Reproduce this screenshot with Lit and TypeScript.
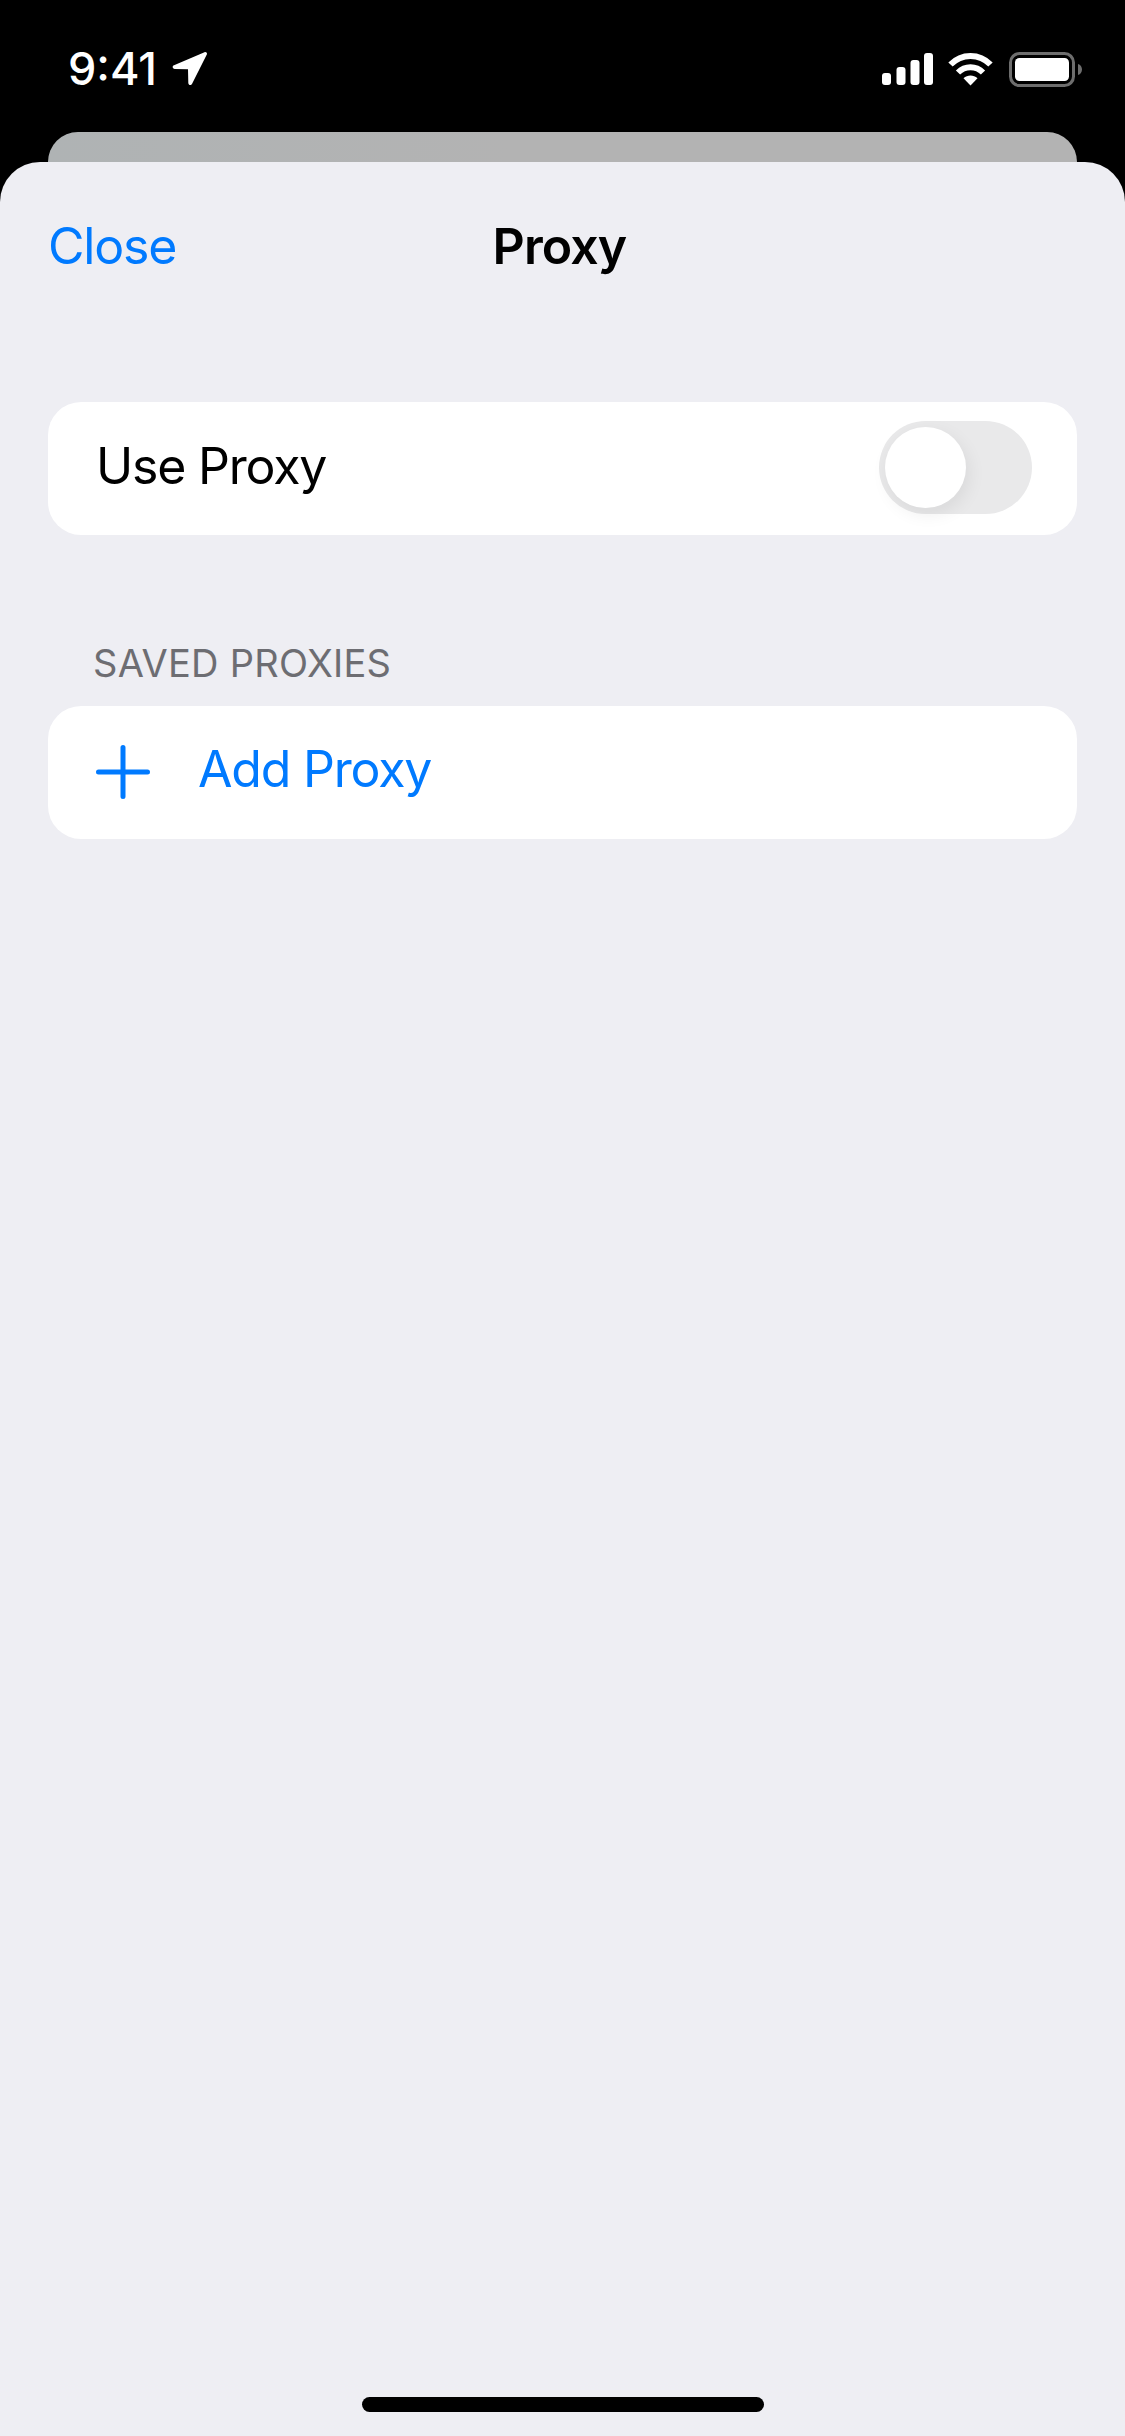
import { LitElement, html, css } from 'lit';
import { customElement } from 'lit/decorators.js';

@customElement('app-root')
export class AppRoot extends LitElement {
  static styles = css`
    :host {
      display: block;
      width: 1125px;
      height: 2436px;
      background: #000;
      font-family: Inter, "Liberation Sans", sans-serif;
      overflow: hidden;
    }
    .status {
      height: 132px;
      box-sizing: border-box;
      padding: 46px 43px 0 68px;
      display: flex;
      align-items: flex-start;
      color: #fff;
    }
    .time {
      display: flex;
      align-items: center;
      height: 46px;
      font-size: 45px;
      font-weight: 500;
      line-height: 46px;
      letter-spacing: 0;
    }
    .arrow {
      width: 36px;
      height: 36px;
      margin-left: 14px;
    }
    .indicators {
      margin-left: auto;
      display: flex;
      align-items: center;
      height: 46px;
    }
    .signal { width: 51px; height: 33px; }
    .wifi { width: 45px; height: 34px; margin-left: 15px; }
    .battery { width: 73px; height: 35px; margin-left: 16px; }
    .peek {
      height: 30px;
      margin: 0 48px;
      border-radius: 30px 30px 0 0;
      background: linear-gradient(90deg, #afb3b4, #b3b3b3 45%);
    }
    .sheet {
      height: 2274px;
      box-sizing: border-box;
      background: #eeeef3;
      border-radius: 40px 40px 0 0;
      padding: 0 48px 24px;
      display: flex;
      flex-direction: column;
    }
    .nav {
      height: 240px;
      box-sizing: border-box;
      padding-top: 54px;
      display: grid;
      grid-template-columns: 1fr auto 1fr;
      align-items: start;
      font-size: 50px;
      line-height: 60px;
      letter-spacing: -1.2px;
    }
    .close { color: #007aff; }
    .title {
      font-weight: 600;
      color: #000;
      position: relative;
      left: -3px;
      letter-spacing: -0.9px;
    }
    .card {
      height: 133px;
      box-sizing: border-box;
      padding: 0 45px 0 48px;
      background: #fff;
      border-radius: 33px;
      display: flex;
      align-items: center;
      font-size: 50px;
      letter-spacing: -1.2px;
    }
    .label { color: #000; margin-bottom: 5px; }
    .toggle {
      margin-left: auto;
      margin-bottom: 2px;
      width: 153px;
      height: 93px;
      box-sizing: border-box;
      padding: 6px;
      border-radius: 47px;
      background: #e9e9ea;
    }
    .knob {
      width: 81px;
      height: 81px;
      border-radius: 50%;
      background: #fff;
      box-shadow: 3px 6px 18px rgba(0, 0, 0, 0.07);
    }
    .section {
      margin: 98px 0 13px 45px;
      height: 60px;
      line-height: 60px;
      font-size: 38px;
      letter-spacing: 0.25px;
      color: #6d6d72;
    }
    .add { gap: 48px; color: #007aff; }
    .add span { margin-bottom: 7px; }
    .plus { width: 54px; height: 54px; flex: none; margin-bottom: 1px; }
    .home {
      margin-top: auto;
      align-self: center;
      width: 402px;
      height: 15px;
      border-radius: 8px;
      background: #000;
    }
  `;

  render() {
    return html`
      <div class="status">
        <div class="time">
          9:41
          <svg class="arrow" viewBox="0 0 36 36" fill="#fff">
            <path d="M33.5 1.2 3 14.2c-2.200 1-1.500 3.800.8 3.800l13.200.3.300 13.700c.1 2.300 2.900 2.800 3.800.7L35.800 3.500c.7-1.600-.8-3-2.300-2.300Z" />
          </svg>
        </div>
        <div class="indicators">
          <svg class="signal" viewBox="0 0 51 33" fill="#fff">
            <rect x="0" y="20" width="9" height="12" rx="3" />
            <rect x="14.500" y="14" width="9" height="18" rx="3" />
            <rect x="28.500" y="7" width="9" height="25" rx="3" />
            <rect x="42" y="0" width="9" height="32" rx="3" />
          </svg>
          <svg class="wifi" viewBox="0 0 45 34" fill="none" stroke="#fff">
            <path d="M2.500 12.500C13.500 1 31.500 1 42.500 12.500" stroke-width="6" />
            <path d="M10 20.500C17 13.500 28 13.500 35 20.500" stroke-width="6" />
            <path d="M15.500 26.300c4-3.800 10-3.800 14 0L22.500 33.500Z" fill="#fff" stroke="none" />
          </svg>
          <svg class="battery" viewBox="0 0 73 35" fill="none">
            <rect x="1.500" y="1.500" width="63" height="32" rx="9" stroke="#6e6e6e" stroke-width="3" />
            <rect x="6" y="6" width="54" height="23" rx="4.500" fill="#fff" />
            <path d="M69 12c2.500.8 4 3 4 5.500s-1.500 4.700-4 5.500Z" fill="#6e6e6e" />
          </svg>
        </div>
      </div>
      <div class="peek"></div>
      <div class="sheet">
        <div class="nav">
          <div class="close">Close</div>
          <div class="title">Proxy</div>
        </div>
        <div class="card">
          <span class="label">Use Proxy</span>
          <div class="toggle"><div class="knob"></div></div>
        </div>
        <div class="section">SAVED PROXIES</div>
        <div class="card add">
          <svg class="plus" viewBox="0 0 54 54" fill="none" stroke="#007aff" stroke-width="5" stroke-linecap="round">
            <path d="M27 2.500v49M2.500 27h49" />
          </svg>
          <span>Add Proxy</span>
        </div>
        <div class="home"></div>
      </div>
    `;
  }
}
